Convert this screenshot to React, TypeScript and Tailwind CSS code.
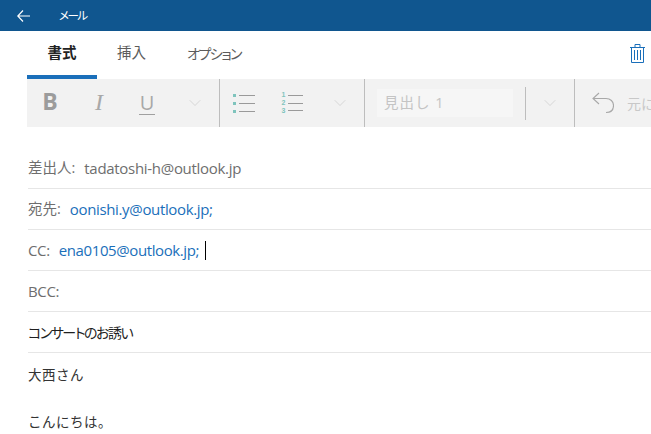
import { ChevronDown } from "lucide-react";

const fontStack = "font-['Open_Sans','Noto_Sans_CJK_JP',sans-serif]";

function ToolCell({ children }: { children: React.ReactNode }) {
  return <div className="flex h-full w-12 shrink-0 items-center justify-center">{children}</div>;
}

function Chevron() {
  return <ChevronDown size={20} strokeWidth={1} className="text-[#d0d0d0]" />;
}

function BulletList() {
  return (
    <svg width="22" height="19" viewBox="0 0 22 19">
      <g fill="#7fc4bd">
        <rect x="0" y="0" width="3" height="3" />
        <rect x="0" y="8" width="3" height="3" />
        <rect x="0" y="16" width="3" height="3" />
      </g>
      <g stroke="#9a9a9a" strokeWidth="1">
        <line x1="6" y1="1.5" x2="22" y2="1.5" />
        <line x1="6" y1="9.5" x2="22" y2="9.5" />
        <line x1="6" y1="17.5" x2="22" y2="17.5" />
      </g>
    </svg>
  );
}

function NumberList() {
  return (
    <div className="flex items-stretch gap-[2px]">
      <div className="w-[5px] text-center font-['Liberation_Sans',sans-serif] text-[7px] leading-[8px] font-bold text-[#7fc4bd]">
        <div>1</div>
        <div>2</div>
        <div>3</div>
      </div>
      <div className="flex w-[15px] flex-col justify-between py-[4px]">
        <div className="h-px bg-[#9a9a9a]" />
        <div className="h-px bg-[#9a9a9a]" />
        <div className="h-px bg-[#9a9a9a]" />
      </div>
    </div>
  );
}

function Row({ children }: { children: React.ReactNode }) {
  return (
    <div className="flex h-[41px] items-center border-b border-[#e6e6e6] text-[14.5px] text-[#6e6e6e]">
      {children}
    </div>
  );
}

export default function App() {
  return (
    <div className={`h-[434px] w-[651px] overflow-hidden bg-white ${fontStack}`}>
      {/* Title bar */}
      <div className="flex h-[31px] items-center bg-[#10568f] text-white">
        <svg width="13" height="12" viewBox="0 0 13 12" fill="none" stroke="white" strokeWidth="1.2" className="ml-[17px]">
          <path d="M6 0.5L0.8 6L6 11.5M0.8 6H13" />
        </svg>
        <span className="ml-[29px] text-[11.5px] tracking-[-1.5px] [font-feature-settings:'palt']">メール</span>
      </div>

      {/* Tabs */}
      <div className="flex h-[48px] items-stretch pl-[27px]">
        <div className="flex w-[70px] shrink-0 items-center justify-center border-b-4 border-[#1a6fba] text-[14.5px] font-bold text-[#222222]">
          書式
        </div>
        <div className="ml-[20px] flex items-center pb-1 text-[14.5px] text-[#5c5c5c]">挿入</div>
        <div className="ml-[41px] flex items-center pb-1 text-[14px] tracking-[-1.5px] text-[#5c5c5c] [font-feature-settings:'palt']">オプション</div>
        <div className="mr-[6px] ml-auto flex items-center pb-[4px]">
          <svg width="15" height="19" viewBox="0 0 15 19" fill="none" stroke="#1a6fba" strokeWidth="1">
            <path d="M0 3.5H15M1.5 3.5V18.5H13.5V3.5M5 3.5V0.5H10V3.5M4.5 6V16M7.5 6V16M10.5 6V16" />
          </svg>
        </div>
      </div>

      {/* Toolbar */}
      <div className="ml-[27px] flex h-[48px] items-center overflow-hidden bg-[#f2f2f2]">
        <ToolCell>
          <span className="mr-[2px] mb-[4px] text-[23px] font-bold text-[#9c9c9c]">B</span>
        </ToolCell>
        <ToolCell>
          <span className="mb-[3px] font-['Liberation_Serif',serif] text-[24px] text-[#a8a8a8] italic">I</span>
        </ToolCell>
        <ToolCell>
          <span className="mb-[1px] border-b border-[#a0a0a0] px-px text-[20px] leading-[23px] text-[#a8a8a8]">U</span>
        </ToolCell>
        <ToolCell>
          <Chevron />
        </ToolCell>
        <div className="h-full w-px shrink-0 bg-[#bdbdbd]" />
        <ToolCell>
          <BulletList />
        </ToolCell>
        <ToolCell>
          <NumberList />
        </ToolCell>
        <ToolCell>
          <Chevron />
        </ToolCell>
        <div className="h-full w-px shrink-0 bg-[#bdbdbd]" />
        <div className="ml-3 flex h-[28px] w-[136px] shrink-0 items-center bg-[#f6f6f6] pl-[7px] text-[14.5px] tracking-[1px] text-[#c4c4c4]">
          見出し 1
        </div>
        <div className="ml-3 h-[33px] w-px shrink-0 bg-[#bdbdbd]" />
        <ToolCell>
          <Chevron />
        </ToolCell>
        <div className="h-full w-px shrink-0 bg-[#bdbdbd]" />
        <div className="flex shrink-0 items-center pl-[17px]">
          <svg width="22" height="22" viewBox="0 0 22 22" fill="none" stroke="#a8a8a8" strokeWidth="1.1">
            <path d="M7 1L1 6.5L7 12M1 6.5H14C18.5 6.5 21.5 9.5 21.5 13.5C21.5 18 18.5 20.5 14 20.5" />
          </svg>
          <span className="ml-[13px] text-[14px] whitespace-nowrap text-[#c8c8c8]">元に戻す</span>
        </div>
      </div>

      {/* Address fields */}
      <div className="mt-[21px] ml-[28px]">
        <Row>
          <span>差出人:</span>
          <span className="ml-[9px] text-[15px] tracking-[-0.3px]">tadatoshi-h@outlook.jp</span>
        </Row>
        <Row>
          <span>宛先:</span>
          <span className="ml-[9px] text-[15px] tracking-[-0.35px] text-[#1a6fba]">oonishi.y@outlook.jp;</span>
        </Row>
        <Row>
          <span className="text-[15px] tracking-[-0.35px]">CC:</span>
          <span className="ml-[9px] text-[15px] tracking-[-0.4px] text-[#1a6fba]">ena0105@outlook.jp;</span>
          <span className="ml-[6px] h-[19px] w-px bg-black" />
        </Row>
        <Row>
          <span className="text-[15px] tracking-[-0.35px]">BCC:</span>
        </Row>
        <Row>
          <span className="text-[14px] tracking-[-1.5px] text-[#1f1f1f] [font-feature-settings:'palt']">コンサートのお誘い</span>
        </Row>
        <div className="pt-[12px] text-[13.5px] tracking-[0.5px] text-[#333333]">大西さん</div>
        <div className="mt-[27px] text-[13.5px] tracking-[0.5px] text-[#333333]">こんにちは。</div>
      </div>
    </div>
  );
}
